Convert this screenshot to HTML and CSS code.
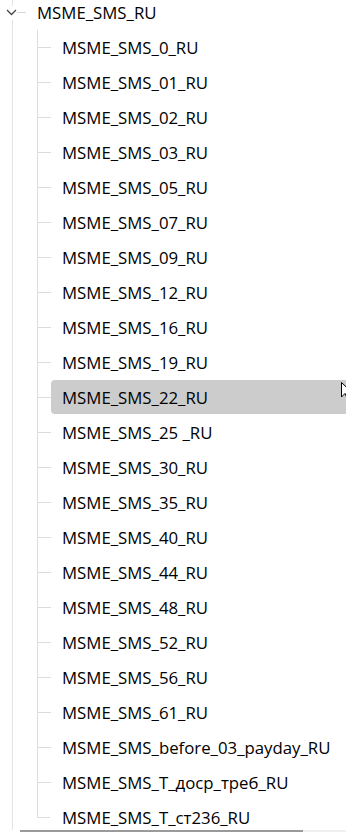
FILE: index.html
```html
<!DOCTYPE html>
<html lang="en">
<head>
  <meta charset="UTF-8" />
  <meta name="viewport" content="width=device-width, initial-scale=1.0"/>
  <title>MSME_SMS_RU</title>
  <link rel="stylesheet" href="styles.css">
</head>
<body>
  <div class="tree">
    <div class="root-row">
      <span class="twisty">
        <svg width="11" height="7" viewBox="0 0 11 7"><path d="M1 1 L5.5 5.5 L10 1" fill="none" stroke="#444" stroke-width="1.3"/></svg>
      </span>
      <span class="twisty-line"></span>
      <span class="label">MSME_SMS_RU</span>
    </div>

    <ul class="children">
      <li class="node"><span class="guide"></span><span class="item">MSME_SMS_0_RU</span></li>
      <li class="node"><span class="guide"></span><span class="item">MSME_SMS_01_RU</span></li>
      <li class="node"><span class="guide"></span><span class="item">MSME_SMS_02_RU</span></li>
      <li class="node"><span class="guide"></span><span class="item">MSME_SMS_03_RU</span></li>
      <li class="node"><span class="guide"></span><span class="item">MSME_SMS_05_RU</span></li>
      <li class="node"><span class="guide"></span><span class="item">MSME_SMS_07_RU</span></li>
      <li class="node"><span class="guide"></span><span class="item">MSME_SMS_09_RU</span></li>
      <li class="node"><span class="guide"></span><span class="item">MSME_SMS_12_RU</span></li>
      <li class="node"><span class="guide"></span><span class="item">MSME_SMS_16_RU</span></li>
      <li class="node"><span class="guide"></span><span class="item">MSME_SMS_19_RU</span></li>
      <li class="node selected"><span class="guide"></span><span class="item">MSME_SMS_22_RU</span></li>
      <li class="node"><span class="guide"></span><span class="item">MSME_SMS_25 _RU</span></li>
      <li class="node"><span class="guide"></span><span class="item">MSME_SMS_30_RU</span></li>
      <li class="node"><span class="guide"></span><span class="item">MSME_SMS_35_RU</span></li>
      <li class="node"><span class="guide"></span><span class="item">MSME_SMS_40_RU</span></li>
      <li class="node"><span class="guide"></span><span class="item">MSME_SMS_44_RU</span></li>
      <li class="node"><span class="guide"></span><span class="item">MSME_SMS_48_RU</span></li>
      <li class="node"><span class="guide"></span><span class="item">MSME_SMS_52_RU</span></li>
      <li class="node"><span class="guide"></span><span class="item">MSME_SMS_56_RU</span></li>
      <li class="node"><span class="guide"></span><span class="item">MSME_SMS_61_RU</span></li>
      <li class="node"><span class="guide"></span><span class="item">MSME_SMS_before_03_payday_RU</span></li>
      <li class="node"><span class="guide"></span><span class="item">MSME_SMS_T_доср_треб_RU</span></li>
      <li class="node last"><span class="guide"></span><span class="item">MSME_SMS_T_ст236_RU</span></li>
    </ul>
  </div>

  <!-- mouse pointer over the selected row -->
  <svg class="cursor" width="12" height="18" viewBox="0 0 12 18">
    <path d="M0.5 0.5 L0.5 15 L4 11.5 L6.5 17 L8.5 16 L6 10.5 L11 10.5 Z" fill="#fff" stroke="#000" stroke-width="1"/>
  </svg>

  <div class="hscroll"><div class="thumb"></div></div>
</body>
</html>
```

FILE: styles.css
```css
* {
  margin: 0;
  padding: 0;
  box-sizing: border-box;
}

html, body {
  width: 100%;
  height: 100%;
  overflow: hidden;
  background: #fff;
  font-family: "Open Sans", "Noto Sans", sans-serif;
  font-size: 16.8px;
  color: #000;
}

.tree {
  position: relative;
  margin-left: 12px;
  height: 830px;
  border-left: 1px solid #e3e3e3;
}

.root-row {
  display: flex;
  align-items: center;
  height: 25px;
  margin-left: -13px;
}

.twisty {
  display: flex;
  align-items: center;
  justify-content: center;
  width: 17px;
  height: 14px;
  padding-left: 6px;
  background: #fff;
}

.twisty-line {
  width: 9px;
  height: 1px;
  background: #d8d8d8;
}

.root-row .label {
  margin-left: 11px;
}

.children {
  list-style: none;
  margin-top: 5px;
  margin-left: 24px;
}

.node {
  display: flex;
  height: 35px;
}

.guide {
  position: relative;
  flex: 0 0 14px;
  border-left: 1px solid #dcdcdc;
}

.guide::after {
  content: "";
  position: absolute;
  left: 0;
  top: 17px;
  width: 13px;
  height: 1px;
  background: #dcdcdc;
}

.node.last .guide {
  border-left: none;
}

.node.last .guide::before {
  content: "";
  position: absolute;
  left: 0;
  top: 0;
  width: 1px;
  height: 18px;
  background: #dcdcdc;
}

.item {
  display: flex;
  align-items: center;
  flex: 1;
  margin: 0 -2px 1px 0;
  padding-left: 11px;
  border-radius: 4px;
  white-space: nowrap;
}

.node.selected .item {
  background: #cccccc;
}

.cursor {
  position: absolute;
  left: 341px;
  top: 382px;
}

.hscroll {
  position: fixed;
  left: 20px;
  right: 0;
  bottom: 0;
  height: 2px;
  background: #f0f0f0;
}

.hscroll .thumb {
  width: 283px;
  height: 100%;
  background: #9a9a9a;
}
```
